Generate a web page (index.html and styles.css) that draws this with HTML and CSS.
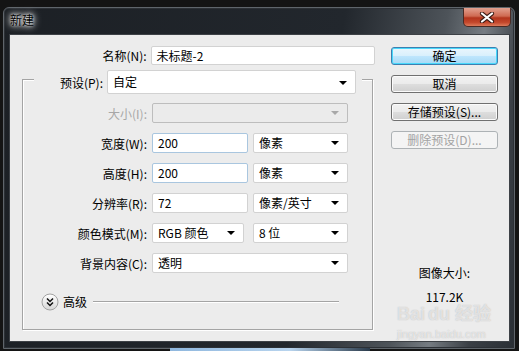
FILE: index.html
```html
<!DOCTYPE html>
<html lang="zh-CN">
  <head>
    <meta charset="UTF-8" />
    <title>新建</title>
    <link rel="stylesheet" href="styles.css">
  </head>
  <body>
    <div class="window">
      <div class="titlebar">
        <span class="title">新建</span>
        <div class="close">
          <svg width="16" height="11" viewBox="0 0 16 11">
            <path d="M3 1.5 L13 9.5 M13 1.5 L3 9.5" stroke="#3a1a14" stroke-width="4.2" stroke-linecap="round" />
            <path d="M3 1.5 L13 9.5 M13 1.5 L3 9.5" stroke="#fff" stroke-width="2.2" stroke-linecap="round" />
          </svg>
        </div>
      </div>

      <div class="content">
        <div class="main">
          <div class="name-row">
            <label class="name-label">名称(N):</label>
            <div class="field name-field">未标题-2</div>
          </div>

          <div class="group">
            <div class="legend">
              <label class="legend-label">预设(P):</label>
              <div class="field select preset">自定</div>
            </div>

            <div class="rows">
              <div class="row">
                <label class="disabled-text">大小(I):</label>
                <div class="field select wide disabled"></div>
              </div>
              <div class="row">
                <label>宽度(W):</label>
                <div class="field num focus">200</div>
                <div class="field select unit">像素</div>
              </div>
              <div class="row">
                <label>高度(H):</label>
                <div class="field num focus">200</div>
                <div class="field select unit">像素</div>
              </div>
              <div class="row">
                <label>分辨率(R):</label>
                <div class="field num">72</div>
                <div class="field select unit">像素/英寸</div>
              </div>
              <div class="row">
                <label>颜色模式(M):</label>
                <div class="field select mode">RGB 颜色</div>
                <div class="field select unit">8 位</div>
              </div>
              <div class="row">
                <label>背景内容(C):</label>
                <div class="field select wide">透明</div>
              </div>
            </div>

            <div class="advanced">
              <svg class="adv-icon" width="18" height="18" viewBox="0 0 18 18">
                <defs>
                  <linearGradient id="adv" x1="0" y1="0" x2="0" y2="1">
                    <stop offset="0" stop-color="#ffffff" />
                    <stop offset="1" stop-color="#d6d6d6" />
                  </linearGradient>
                </defs>
                <circle cx="9" cy="9" r="8" fill="url(#adv)" stroke="#a2a2a2" />
                <path d="M6 5.5 L9 8.5 L12 5.5 M6 9.5 L9 12.5 L12 9.5" fill="none" stroke="#111" stroke-width="1.5" />
              </svg>
              <span class="adv-text">高级</span>
              <div class="adv-line"></div>
            </div>
          </div>
        </div>

        <div class="side">
          <button class="btn default">确定</button>
          <button class="btn">取消</button>
          <button class="btn">存储预设(S)...</button>
          <button class="btn" disabled>删除预设(D)...</button>

          <div class="size-label">图像大小:</div>
          <div class="size-value">117.2K</div>
        </div>
      </div>
    </div>

    <div class="taskbar"></div>

    <div class="watermark">
      <div class="wm-logo">Bai<span class="wm-du">du</span> 经验</div>
      <div class="wm-url">jingyan.baidu.com</div>
    </div>
  </body>
</html>
```

FILE: styles.css
```css
* {
  box-sizing: border-box;
}

body {
  margin: 0;
  width: 519px;
  height: 351px;
  overflow: hidden;
  position: relative;
  background: #141414;
  font-family: "Noto Sans CJK SC", "Liberation Sans", sans-serif;
  font-size: 12px;
  color: #000;
}

.window {
  margin: 7px 0 0 3px;
  width: 512px;
  height: 342px;
  border: 1px solid #5f656b;
  border-radius: 6px 6px 0 0;
  padding: 0 4px 5px 5px;
  background: linear-gradient(100deg, #1c2025 0%, #22272d 60%, #4d5359 78%, #767c82 85%, #3a3f45 92%, #2a2f35 100%);
  box-shadow: inset 0 0 0 1px #2c3035;
}

.titlebar {
  height: 26px;
  display: flex;
  align-items: flex-start;
}

.title {
  margin-left: 1px;
  padding-top: 4px;
  line-height: 16px;
  font-size: 12px;
  color: #000;
  text-shadow: 0 0 6px #fff, 0 0 10px #fff, 0 0 3px #d8dadc;
}

.close {
  margin-left: auto;
  margin-right: -1px;
  width: 48px;
  height: 19px;
  border: 1px solid #4a2a24;
  border-top: none;
  border-radius: 0 0 5px 5px;
  background: linear-gradient(#e2a08f 0%, #cf6a52 45%, #b2341c 55%, #c4482c 80%, #dd7a5a 100%);
  display: flex;
  align-items: center;
  justify-content: center;
}

.content {
  height: 308px;
  background: #ececec;
  border: 1px solid #3d4146;
  display: flex;
  gap: 16px;
}

.main {
  width: 365px;
}

.name-row {
  margin-top: 11px;
  display: flex;
  align-items: center;
  gap: 4px;
}

.name-label {
  width: 137px;
  text-align: right;
}

.field {
  height: 20px;
  line-height: 18px;
  background: #fff;
  border: 1px solid #d2d2d2;
  border-radius: 2px;
  padding-left: 5px;
  position: relative;
  white-space: nowrap;
}

.name-field {
  width: 225px;
  height: 19px;
  line-height: 17px;
}

.select::after {
  content: "";
  position: absolute;
  right: 8px;
  top: 7px;
  border-left: 4px solid transparent;
  border-right: 4px solid transparent;
  border-top: 4px solid #000;
}

.group {
  margin: 14px 0 0 12px;
  width: 351px;
  height: 251px;
  border: 1px solid #a4a4a4;
  box-shadow: inset 1px 1px 0 #fff, 1px 1px 0 #fff;
}

.legend {
  margin: -10px 0 0 11px;
  width: 328px;
  padding-right: 6px;
  background: #ececec;
  display: flex;
  align-items: center;
  gap: 4px;
}

.legend-label {
  flex: 1;
  text-align: right;
}

.preset {
  width: 249px;
  height: 24px;
  line-height: 22px;
}

.preset::after {
  top: 10px;
}

.rows {
  margin-top: 9px;
  display: flex;
  flex-direction: column;
  gap: 10px;
}

.row {
  display: flex;
  align-items: center;
  gap: 5px;
  height: 20px;
}

.row label {
  width: 124px;
  text-align: right;
}

.disabled-text {
  color: #a7a7a7;
}

.wide {
  width: 196px;
}

.disabled {
  background: #ebebeb;
  border-color: #bdbdbd;
}

.disabled::after {
  border-top-color: #a8a8a8;
}

.num {
  width: 96px;
}

.focus {
  border-color: #a9c6df;
}

.unit {
  width: 95px;
}

.mode {
  width: 92px;
  margin-right: 4px;
}

.advanced {
  margin: 20px 0 0 18px;
  display: flex;
  align-items: center;
  height: 18px;
}

.adv-icon {
  display: block;
}

.adv-text {
  margin-left: 4px;
  line-height: 16px;
}

.adv-line {
  margin-left: 6px;
  width: 246px;
  height: 2px;
  border-top: 1px solid #a4a4a4;
  border-bottom: 1px solid #fff;
}

.side {
  width: 107px;
  padding-top: 12px;
  display: flex;
  flex-direction: column;
  gap: 10px;
}

.btn {
  height: 18px;
  padding: 0;
  font-family: inherit;
  font-size: 12px;
  line-height: 16px;
  color: #000;
  border: 1px solid #707070;
  border-radius: 3px;
  background: linear-gradient(#f2f2f2 0%, #ebebeb 48%, #dddddd 52%, #cfcfcf 100%);
  box-shadow: inset 0 0 0 1px #fbfbfb;
}

.btn.default {
  border-color: #3c7fb1;
  box-shadow: inset 0 0 0 1px #48d8fb;
  background: linear-gradient(#eaf6fd 0%, #d9f0fc 48%, #bee6fd 52%, #a7d9f5 100%);
}

.btn:disabled {
  color: #a3a3a3;
  border-color: #adb2b5;
  background: #f4f4f4;
  box-shadow: none;
}

.size-label {
  margin-top: 106px;
  text-align: center;
  line-height: 16px;
}

.size-value {
  margin-top: -2px;
  text-align: center;
  line-height: 16px;
}

.taskbar {
  position: absolute;
  left: 170px;
  bottom: 0;
  width: 200px;
  height: 3px;
  background: linear-gradient(90deg, #8fb7de, #b8d4ee 60%, #2a3a4a);
}

.watermark {
  position: absolute;
  left: 397px;
  top: 304px;
  color: rgba(255, 255, 255, 0.6);
  text-shadow: 0 0 1px rgba(120, 120, 120, 0.5);
  pointer-events: none;
}

.wm-logo {
  font-family: "Liberation Sans", "Noto Sans CJK SC", sans-serif;
  font-weight: bold;
  font-size: 18px;
  line-height: 20px;
}

.wm-du {
  margin-left: 3px;
}

.wm-url {
  margin-top: 4px;
  font-family: "Liberation Sans", sans-serif;
  font-size: 11px;
  line-height: 12px;
}
```
